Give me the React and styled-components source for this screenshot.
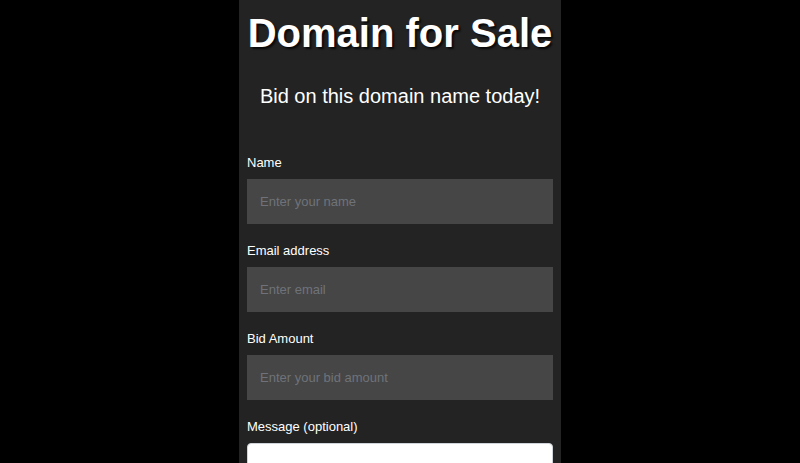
import React from "react";
import styled, { createGlobalStyle } from "styled-components";

const Global = createGlobalStyle`
  html, body { margin: 0; padding: 0; background: #000; }
  body { font-family: "Liberation Sans", Arial, Helvetica, sans-serif; color: #fff; }
  * { box-sizing: border-box; }
`;

const Page = styled.div`
  display: flex;
  justify-content: center;
  min-height: 100vh;
  background: #000;
`;

const Panel = styled.main`
  width: 322px;
  background: #232323;
  padding: 9px 8px 40px;
  min-height: 100vh;
`;

const Title = styled.h1`
  margin: 0;
  font-size: 40px;
  line-height: 48px;
  font-weight: 700;
  text-align: center;
  color: #fff;
  text-shadow: 2px 2px 2px rgba(0, 0, 0, 0.75);
`;

const Subtitle = styled.p`
  margin: 27px 0 0;
  font-size: 20px;
  line-height: 24px;
  text-align: center;
  color: #fff;
`;

const Form = styled.form`
  margin-top: 44px;
  display: flex;
  flex-direction: column;
`;

const Group = styled.div`
  display: flex;
  flex-direction: column;
  margin-bottom: 16px;
`;

const Label = styled.label`
  font-size: 13px;
  line-height: 22px;
  color: #fff;
  margin-bottom: 5px;
`;

const Input = styled.input`
  height: 45px;
  width: 100%;
  border: none;
  border-radius: 0;
  background: #464646;
  color: #fff;
  padding: 0 13px;
  font-family: inherit;
  font-size: 13px;
  outline: none;
  &::placeholder { color: #6f7379; }
`;

const TextArea = styled.textarea`
  width: 100%;
  height: 90px;
  border: 1px solid #ced4da;
  border-radius: 4px;
  background: #fff;
  padding: 8px 12px;
  font-family: inherit;
  font-size: 13px;
  resize: vertical;
`;

const fields = [
  { id: "name", label: "Name", placeholder: "Enter your name", type: "text" },
  { id: "email", label: "Email address", placeholder: "Enter email", type: "email" },
  { id: "bid", label: "Bid Amount", placeholder: "Enter your bid amount", type: "text" },
];

export default function App() {
  return (
    <>
      <Global />
      <Page>
        <Panel>
          <Title>Domain for Sale</Title>
          <Subtitle>Bid on this domain name today!</Subtitle>
          <Form onSubmit={(e) => e.preventDefault()}>
            {fields.map((f) => (
              <Group key={f.id}>
                <Label htmlFor={f.id}>{f.label}</Label>
                <Input id={f.id} type={f.type} placeholder={f.placeholder} />
              </Group>
            ))}
            <Group>
              <Label htmlFor="message">Message (optional)</Label>
              <TextArea id="message" />
            </Group>
          </Form>
        </Panel>
      </Page>
    </>
  );
}
